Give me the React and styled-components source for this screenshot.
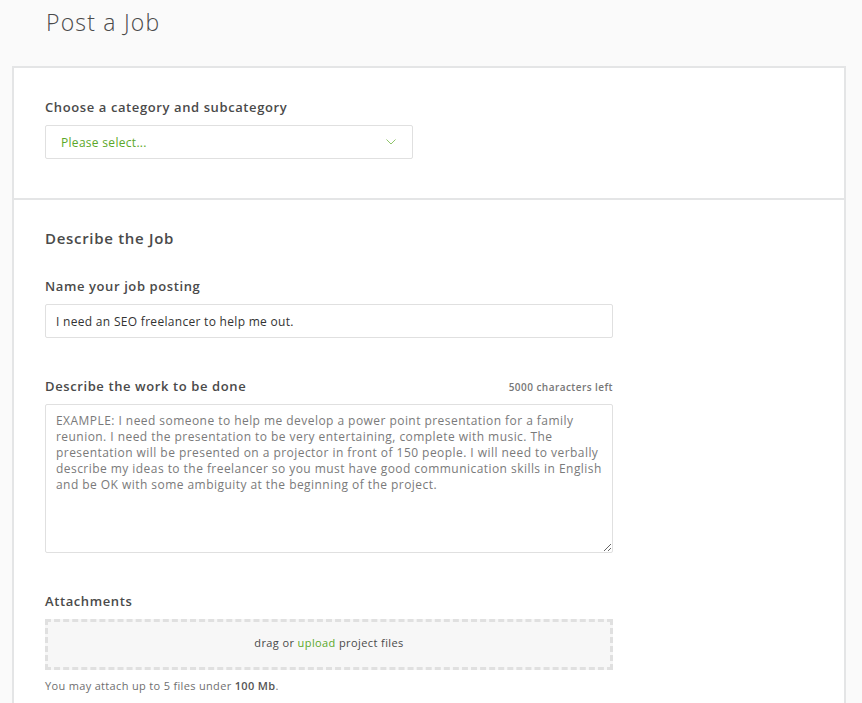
import React from "react";
import styled, { createGlobalStyle } from "styled-components";

const GlobalStyle = createGlobalStyle`
  * { box-sizing: border-box; }
  body {
    margin: 0;
    background: #fafafa;
    font-family: "Open Sans", "Liberation Sans", sans-serif;
    color: #4a4a4a;
  }
`;

const Page = styled.div`
  padding: 8px 16px 0 12px;
`;

const PageTitle = styled.h1`
  margin: 0 0 30px 34px;
  font-size: 23px;
  line-height: 28px;
  font-weight: 300;
  letter-spacing: 1.2px;
  color: #4a4a4a;
`;

const Card = styled.div`
  background: #fff;
  border: 2px solid #e4e5e6;
  border-bottom: none;
`;

const Section = styled.section`
  padding: ${(p) => p.$pad};
  &:not(:first-child) {
    border-top: 2px solid #e4e5e6;
  }
`;

const SectionTitle = styled.h2`
  margin: 0 0 30px;
  font-size: 15px;
  line-height: 20px;
  font-weight: 600;
  letter-spacing: 0.7px;
  color: #4a4a4a;
`;

const Field = styled.div`
  width: ${(p) => p.$width || 568}px;
  & + & {
    margin-top: 40px;
  }
`;

const LabelRow = styled.div`
  display: flex;
  justify-content: space-between;
  align-items: baseline;
  margin-bottom: 10px;
`;

const Label = styled.label`
  font-size: 13px;
  line-height: 16px;
  font-weight: 600;
  letter-spacing: 0.6px;
  color: #4a4a4a;
`;

const Counter = styled.span`
  font-size: 10px;
  font-weight: 600;
  letter-spacing: 0.45px;
  color: #777;
`;

const SelectBox = styled.div`
  display: flex;
  align-items: center;
  justify-content: space-between;
  height: 34px;
  padding: 0 16px 0 15px;
  border: 1px solid #e0e0e0;
  border-radius: 2px;
  font-size: 12px;
  letter-spacing: 0.3px;
  color: #5ba829;
`;

const TextInput = styled.input`
  display: block;
  width: 100%;
  height: 34px;
  padding: 0 10px;
  border: 1px solid #e0e0e0;
  border-radius: 2px;
  font-family: inherit;
  font-size: 12px;
  letter-spacing: 0.3px;
  color: #333;
  outline: none;
`;

const TextArea = styled.textarea`
  display: block;
  width: 100%;
  height: 149px;
  padding: 8px 5px 8px 10px;
  border: 1px solid #e0e0e0;
  border-radius: 2px;
  font-family: inherit;
  font-size: 12px;
  line-height: 16px;
  letter-spacing: 0.45px;
  color: #333;
  outline: none;
  resize: vertical;
  &::placeholder {
    color: #7a7a7a;
  }
`;

const DropZone = styled.div`
  height: 51px;
  display: flex;
  align-items: center;
  justify-content: center;
  padding-bottom: 4px;
  background: #f7f7f7;
  border: 3px dashed #e0e0e0;
  font-size: 11px;
  letter-spacing: 0.4px;
  color: #4a4a4a;
`;

const Green = styled.span`
  color: #5ba829;
`;

const Note = styled.p`
  margin: 9px 0 0;
  font-size: 11px;
  line-height: 14px;
  letter-spacing: 0.33px;
  color: #6f6f6f;
  b {
    font-weight: 600;
    color: #555;
  }
`;

const Chevron = () => (
  <svg width="10" height="6" viewBox="0 0 10 6" fill="none">
    <path d="M0.5 0.5 L5 5 L9.5 0.5" stroke="#8fc46a" strokeWidth="1" />
  </svg>
);

export default function App() {
  return (
    <>
      <GlobalStyle />
      <Page>
        <PageTitle>Post a Job</PageTitle>
        <Card>
          <Section $pad="31px 31px 39px">
            <Field $width={368}>
              <LabelRow>
                <Label>Choose a category and subcategory</Label>
              </LabelRow>
              <SelectBox>
                <span>Please select...</span>
                <Chevron />
              </SelectBox>
            </Field>
          </Section>
          <Section $pad="28px 31px 20px">
            <SectionTitle>Describe the Job</SectionTitle>
            <Field>
              <LabelRow>
                <Label>Name your job posting</Label>
              </LabelRow>
              <TextInput defaultValue="I need an SEO freelancer to help me out." />
            </Field>
            <Field>
              <LabelRow>
                <Label>Describe the work to be done</Label>
                <Counter>5000 characters left</Counter>
              </LabelRow>
              <TextArea placeholder="EXAMPLE: I need someone to help me develop a power point presentation for a family reunion. I need the presentation to be very entertaining, complete with music. The presentation will be presented on a projector in front of 150 people. I will need to verbally describe my ideas to the freelancer so you must have good communication skills in English and be OK with some ambiguity at the beginning of the project." />
            </Field>
            <Field>
              <LabelRow>
                <Label>Attachments</Label>
              </LabelRow>
              <DropZone>
                <span>
                  drag or <Green>upload</Green> project files
                </span>
              </DropZone>
              <Note>
                You may attach up to 5 files under <b>100 Mb</b>.
              </Note>
            </Field>
          </Section>
        </Card>
      </Page>
    </>
  );
}
